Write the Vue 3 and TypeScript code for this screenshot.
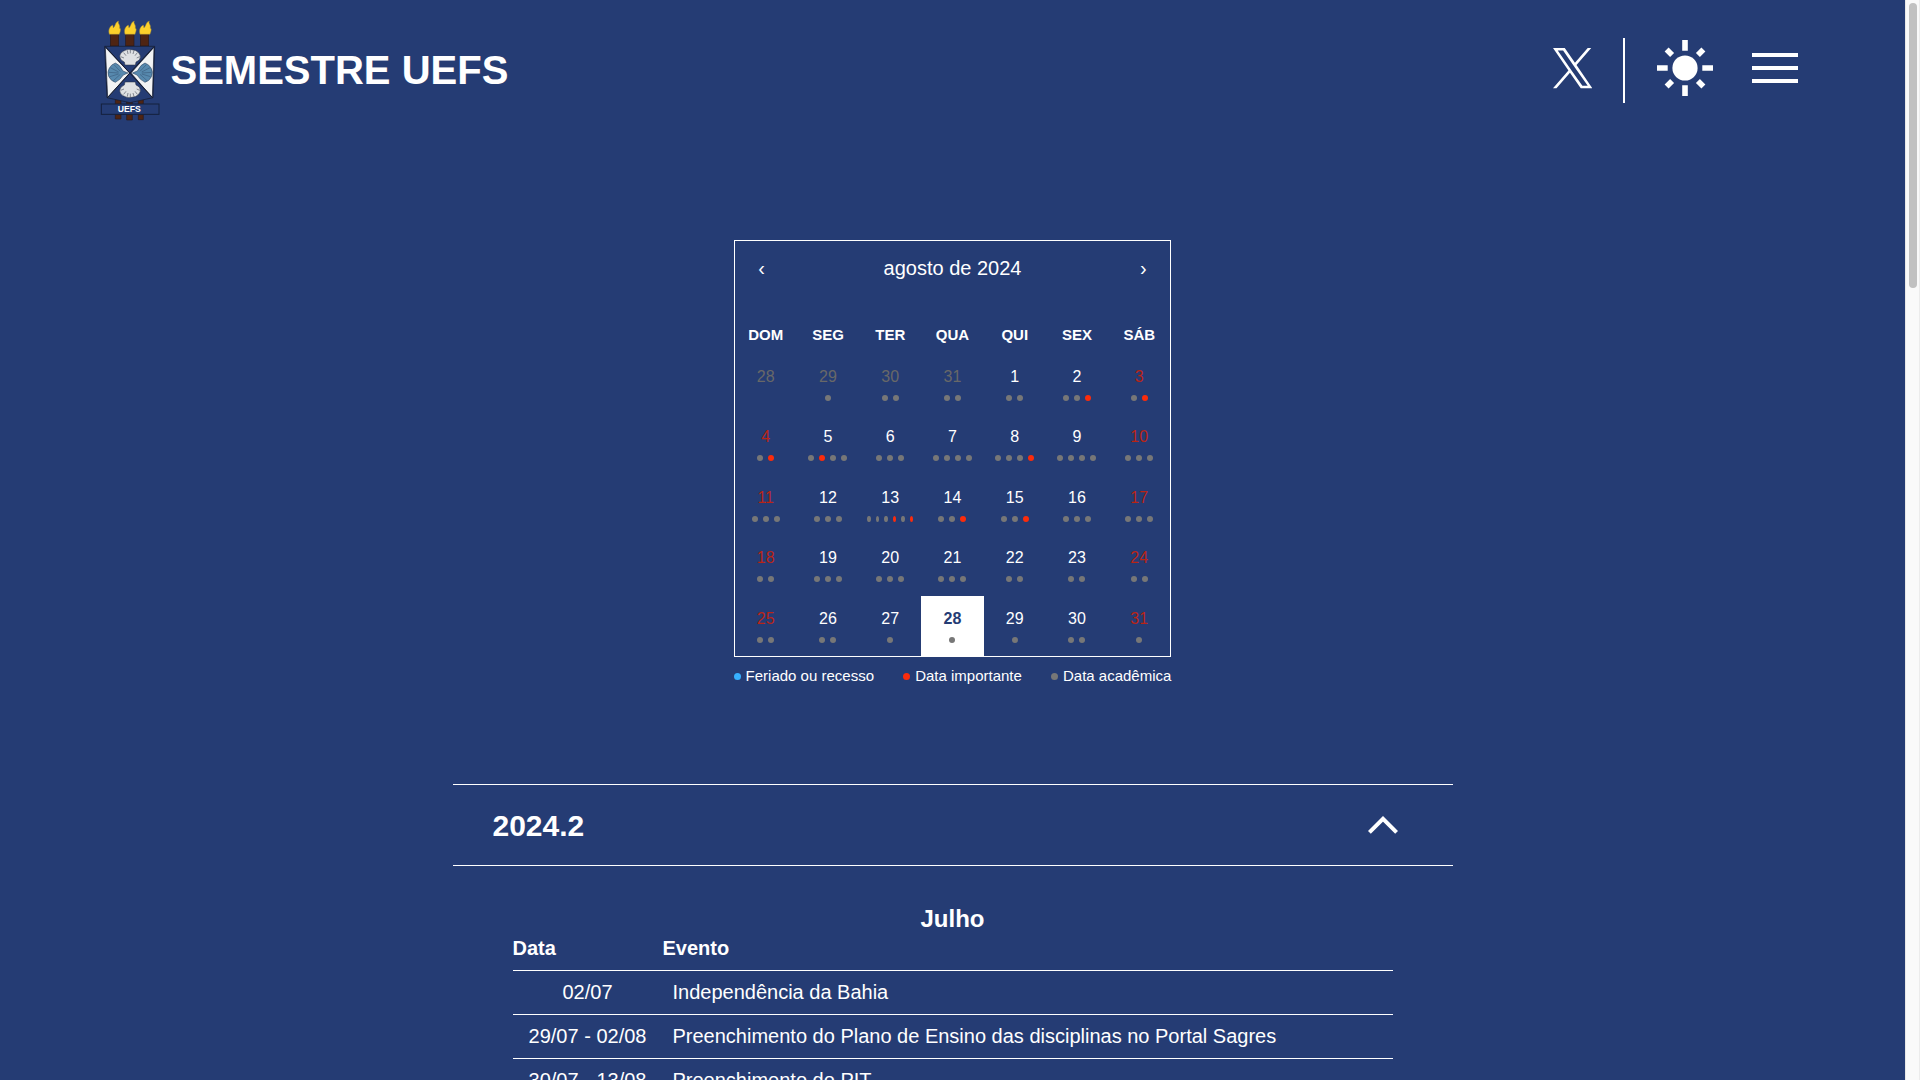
<script setup lang="ts">
interface Day {
  n: number
  dots: string
  kind?: 'out' | 'weekend' | 'today'
}

// Each letter is one event of the day: a = acadêmica, i = importante
const dots: string[] = [
  '', 'a', 'aa', 'aa', 'aa', 'aai', 'ai',
  'ai', 'aiaa', 'aaa', 'aaaa', 'aaai', 'aaaa', 'aaa',
  'aaa', 'aaa', 'aaaiai', 'aai', 'aai', 'aaa', 'aaa',
  'aa', 'aaa', 'aaa', 'aaa', 'aa', 'aa', 'aa',
  'aa', 'aa', 'a', 'a', 'a', 'aa', 'a',
]

const weekdays: string[] = ['DOM', 'SEG', 'TER', 'QUA', 'QUI', 'SEX', 'SÁB']

const days: Day[] = dots.map((d, i) => {
  const n = i < 4 ? 28 + i : i - 3
  let kind: Day['kind']
  if (i < 4) kind = 'out'
  else if (n === 28) kind = 'today'
  else if (i % 7 === 0 || i % 7 === 6) kind = 'weekend'
  return { n, dots: d, kind }
})

const legend = [
  { type: 'h', label: 'Feriado ou recesso' },
  { type: 'i', label: 'Data importante' },
  { type: 'a', label: 'Data acadêmica' },
]

const events = [
  { date: '02/07', name: 'Independência da Bahia' },
  { date: '29/07 - 02/08', name: 'Preenchimento do Plano de Ensino das disciplinas no Portal Sagres' },
  { date: '30/07 - 13/08', name: 'Preenchimento do PIT' },
]
</script>

<template>
  <div class="window">
    <div class="page">
      <header class="header">
        <svg class="logo" viewBox="0 -2 240 360">
          <g fill="#4e2413" stroke="#2a1a1c" stroke-width="2">
            <rect x="61" y="70" width="25" height="36" />
            <rect x="107" y="70" width="25" height="36" />
            <rect x="151" y="70" width="25" height="36" />
            <path d="M76 262h17v63h-17zM110 268h17v60h-17zM145 262h15v65h-15z" />
          </g>
          <g fill="#fcd02b" stroke="#8f7a3a" stroke-width="1.5">
            <path id="flame" d="M58 71C54 59 58 48 68 43C70 48 69 50 70 51C77 46 75 34 86 31C82 39 92 42 89 53C94 52 91 64 88 71Z" />
            <use href="#flame" x="47" />
            <use href="#flame" x="92" />
          </g>
          <path d="M44 107H194L189 261L120 276L51 261Z" fill="#253c74" stroke="#141a2c" stroke-width="2" />
          <path d="M46 110L119 187L53 261Z" fill="#f2f3f4" stroke="#141a2c" stroke-width="2" />
          <path d="M192 110L123 187L187 261Z" fill="#f2f3f4" stroke="#141a2c" stroke-width="2" />
          <path d="M46 108L188 261M192 108L52 261" stroke="#141a2c" stroke-width="3" />
          <g fill="#dfe1e3" stroke="#262c3a" stroke-width="1.5">
            <path id="shell" d="M105 163L103 154Q90 149 89 137Q90 126 101 121Q112 114 124 117Q138 117 146 126Q155 136 149 146Q145 151 138 154L136 163Z" />
            <path id="ribs" fill="none" d="M101 126L108 135M92 138L102 142M112 119L114 130M121 117V128M132 119L129 130M142 126L135 135M149 138L140 142" />
            <g transform="matrix(1 0 0 -1 0 377)">
              <use href="#shell" />
              <use href="#ribs" />
            </g>
          </g>
          <g fill="#5789ae" stroke="#203552" stroke-width="1.5">
            <path id="side" d="M114 187L99 181Q88 160 76 157Q64 161 58 172Q51 184 56 197Q62 211 76 215Q91 208 100 193Z" />
            <path id="side-ribs" fill="none" stroke-width="1" d="M72 162L91 182M61 171L86 184M57 185L85 187M59 198L86 190M70 210L91 191" />
            <g transform="matrix(-1 0 0 1 241 0)">
              <use href="#side" />
              <use href="#side-ribs" />
            </g>
          </g>
          <rect x="34" y="280" width="173" height="31" fill="#253c74" stroke="#14203d" stroke-width="3" />
          <text x="118" y="305" text-anchor="middle" font-size="26" font-weight="700" fill="#fff" textLength="69">UEFS</text>
        </svg>
        <h1 class="brand">SEMESTRE UEFS</h1>
        <nav class="actions">
          <svg class="x-icon" viewBox="0 0 1200 1227" fill="#fff">
            <path d="M714.163 519.284L1160.89 0H1055.03L667.137 450.887L357.328 0H0L468.492 681.821L0 1226.37H105.866L515.491 750.218L842.672 1226.37H1200L714.137 519.284H714.163ZM569.165 687.828L521.697 619.934L144.011 79.6944H306.615L611.412 515.685L658.88 583.579L1055.08 1150.3H892.476L569.165 687.854V687.828Z" />
          </svg>
          <span class="divider"></span>
          <svg class="sun" viewBox="-28 -28 56 56" stroke="#fff" stroke-width="5.6">
            <circle r="12.6" fill="#fff" stroke="none" />
            <path d="M0-28V-17.3M0 28V17.3M-28 0H-17.3M28 0H17.3M-18.4-18.4L-12.9-12.9M18.4-18.4L12.9-12.9M-18.4 18.4L-12.9 12.9M18.4 18.4L12.9 12.9" />
          </svg>
          <svg class="menu" viewBox="0 0 46 30" stroke="#fff" stroke-width="3.8">
            <path d="M0 2H46M0 15H46M0 28H46" />
          </svg>
        </nav>
      </header>

      <section class="calendar-block">
        <div class="calendar">
          <div class="nav">
            <span class="arrow">‹</span>
            <span class="month">agosto de 2024</span>
            <span class="arrow">›</span>
          </div>
          <div class="weekdays">
            <span v-for="w in weekdays" :key="w">{{ w }}</span>
          </div>
          <div class="days">
            <div v-for="(d, i) in days" :key="i" class="day" :class="d.kind">
              <span class="num">{{ d.n }}</span>
              <div class="dots">
                <i v-for="(t, k) in d.dots" :key="k" class="dot" :class="t"></i>
              </div>
            </div>
          </div>
        </div>
        <div class="legend">
          <span v-for="l in legend" :key="l.type" class="legend-item">
            <i class="mark" :class="l.type"></i>{{ l.label }}
          </span>
        </div>
      </section>

      <section class="semester">
        <div class="semester-head">
          <h2>2024.2</h2>
          <svg class="chevron" viewBox="0 0 30 18" fill="none" stroke="#fff" stroke-width="4">
            <path d="M1.4 16.4L15 2.8L28.6 16.4" />
          </svg>
        </div>
        <div class="table">
          <h3>Julho</h3>
          <div class="row head"><span>Data</span><span>Evento</span></div>
          <div v-for="e in events" :key="e.date" class="row">
            <span class="date">{{ e.date }}</span>
            <span class="name">{{ e.name }}</span>
          </div>
        </div>
      </section>
    </div>
    <div class="scrollbar"><div class="thumb"></div></div>
  </div>
</template>

<style>
body {
  overflow: hidden;
}
</style>

<style scoped>
.window {
  display: flex;
  height: 1080px;
  overflow: hidden;
  background: #253c74;
  color: #fff;
  font-family: Helvetica, "Liberation Sans", Arial, sans-serif;
}
.page {
  width: 1905px;
}
.scrollbar {
  box-sizing: border-box;
  width: 15px;
  padding: 3px 0 0 3px;
  background: #fafafa;
  border-left: 1px solid #e8e8e8;
  border-right: 1px solid #ececec;
}
.thumb {
  width: 8px;
  height: 285px;
  border-radius: 4px;
  background: #c1c1c1;
}
.header {
  display: flex;
  align-items: center;
  box-sizing: border-box;
  height: 140px;
  padding: 0 107px 0 90px;
}
.logo {
  width: 80px;
  height: 120px;
}
.brand {
  margin: 0 0 0 0.5px;
  font-size: 40px;
  line-height: 46px;
}
.actions {
  display: flex;
  align-items: center;
  margin: 0 0 3px auto;
}
.x-icon {
  width: 39.5px;
  height: 40.4px;
  margin-right: 31px;
}
.divider {
  width: 2px;
  height: 65px;
  margin: 3px 32px 0 0;
  background: #fff;
}
.sun {
  width: 56px;
  height: 56px;
  margin: 0 39px 1.5px 0;
}
.menu {
  width: 46px;
  height: 30px;
  margin-bottom: 1.5px;
}
.calendar-block {
  width: 437.8px;
  margin: 100px auto 0;
}
.calendar {
  box-sizing: border-box;
  height: 417px;
  border: 1px solid #fff;
}
.nav {
  display: flex;
  align-items: center;
  height: 54px;
  font-size: 20px;
}
.arrow {
  width: 54px;
  text-align: center;
}
.month {
  flex: 1;
  text-align: center;
}
.weekdays {
  display: grid;
  grid-template-columns: repeat(7, 1fr);
  margin-top: 28px;
  height: 31px;
  text-align: center;
  font-size: 15px;
  font-weight: 700;
  line-height: 23px;
}
.days {
  display: grid;
  grid-template-columns: repeat(7, 1fr);
  grid-auto-rows: 60.4px;
}
.day {
  display: flex;
  flex-direction: column;
  align-items: center;
  padding-top: 14px;
  box-sizing: border-box;
}
.num {
  font-size: 16px;
  line-height: 18px;
}
.out .num {
  color: #686868;
}
.weekend .num {
  color: #b92416;
}
.today {
  background: #fff;
}
.today .num {
  color: #253c74;
  font-weight: 700;
}
.dots {
  display: flex;
  justify-content: center;
  gap: 5px;
  width: 46.4px;
  margin-top: 9px;
}
.dot {
  width: 6px;
  height: 6px;
  border-radius: 50%;
}
.a {
  background: #777;
}
.i {
  background: #fb2c0c;
}
.h {
  background: #37b0ff;
}
.legend {
  display: flex;
  justify-content: space-between;
  margin-top: 10px;
  font-size: 15px;
  line-height: 18px;
}
.legend-item {
  display: flex;
  align-items: center;
}
.mark {
  width: 7px;
  height: 7px;
  margin-right: 5px;
  border-radius: 50%;
}
.semester {
  width: 1000px;
  margin: 99px auto 0;
}
.semester-head {
  display: flex;
  align-items: center;
  justify-content: space-between;
  box-sizing: border-box;
  height: 82px;
  padding: 0 55px 1px 40px;
  border: solid #fff;
  border-width: 1px 0;
}
.semester-head h2 {
  margin: 3px 0 0;
  font-size: 30px;
}
.chevron {
  width: 30px;
  height: 18px;
}
.table {
  width: 880px;
  margin: 39px auto 0;
  font-size: 20px;
}
.table h3 {
  margin: 0;
  text-align: center;
  font-size: 24px;
  line-height: 28px;
}
.row {
  display: grid;
  grid-template-columns: 150px 1fr;
  height: 43px;
  line-height: 43px;
  border-bottom: 1px solid #fff;
}
.row.head {
  height: 37px;
  line-height: 30px;
  font-weight: 700;
}
.date {
  text-align: center;
}
.name {
  padding-left: 10px;
}
</style>
